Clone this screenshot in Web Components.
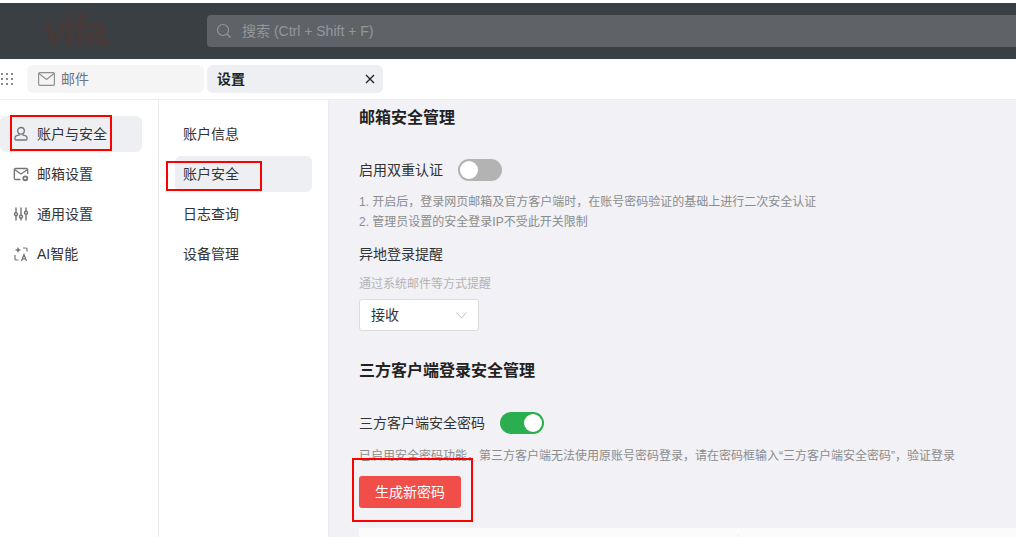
<!DOCTYPE html>
<html lang="zh"><head><meta charset="utf-8">
<style>
html,body{margin:0;padding:0;height:537px;width:1016px;overflow:hidden;background:#fff;font-family:"Liberation Sans","Noto Sans CJK SC",sans-serif}
</style></head><body>
<app-shell></app-shell>
<script>
const I={
user:'<svg width="16" height="16" viewBox="0 0 16 16" fill="none" stroke="#747474" stroke-width="1.300"><circle cx="8" cy="4.800" r="3.300"/><path d="M6 8.200v1C3.500 9.500 2 10.300 2 11.800V13c0 .6.400 1 1 1h10c.6 0 1-.4 1-1v-1.200c0-1.500-1.500-2.300-4-2.600v-1"/></svg>',
mailset:'<svg width="16" height="16" viewBox="0 0 16 16" fill="none" stroke="#747474" stroke-width="1.300"><path d="M7.500 13.500H2.500A1.200 1.200 0 0 1 1.300 12.300V3.700A1.200 1.200 0 0 1 2.500 2.500h11a1.200 1.200 0 0 1 1.200 1.200V8"/><path d="M1.800 3.800 8 8l6.200-4.200"/><circle cx="12.300" cy="12.300" r="2" stroke-width="1.800"/></svg>',
sliders:'<svg width="16" height="16" viewBox="0 0 16 16" fill="none" stroke="#747474" stroke-width="1.400"><path d="M3 1.500v5M3 10v4.500M8 1.500v7.500M8 12.500v2M13 1.500v3.500M13 8.500v6"/><circle cx="3" cy="8.200" r="1.500"/><circle cx="8" cy="10.800" r="1.500"/><circle cx="13" cy="6.800" r="1.500"/></svg>',
ai:'<svg width="16" height="16" viewBox="0 0 16 16" fill="none" stroke="#747474" stroke-width="1.200"><path d="M5 .8l.9 2.300 2.300.9-2.300.9L5 7.200l-.9-2.300L1.800 4l2.300-.9z" fill="#747474" stroke="none"/><path d="M10 2h3c.6 0 1 .4 1 1v2.500M2 9v4c0 .6.400 1 1 1h2.500M8.500 15l2.500-6.500 2.500 6.500M9.400 12.800h3.200"/></svg>',
search:'<svg width="16" height="16" viewBox="0 0 16 16" fill="none" stroke="#94979a" stroke-width="1.200"><circle cx="7" cy="7" r="5.500"/><path d="M11 11l3.500 3.500"/></svg>',
mail:'<svg width="17" height="14" viewBox="0 0 17 14" fill="none" stroke="#8f8f8f" stroke-width="1.200"><rect x=".6" y=".6" width="15.800" height="12.800" rx="1.200"/><path d="M1 1.500l7.500 6 7.500-6"/></svg>',
grid:'<svg width="14" height="14" viewBox="0 0 14 14" fill="#8a8a8a"><rect x="1" y="1" width="2" height="2"/><rect x="6" y="1" width="2" height="2"/><rect x="11" y="1" width="2" height="2"/><rect x="1" y="6" width="2" height="2"/><rect x="6" y="6" width="2" height="2"/><rect x="11" y="6" width="2" height="2"/><rect x="1" y="11" width="2" height="2"/><rect x="6" y="11" width="2" height="2"/><rect x="11" y="11" width="2" height="2"/></svg>'
};
function def(name,css,html){
  customElements.define(name,class extends HTMLElement{
    constructor(){super();this.attachShadow({mode:'open'}).innerHTML='<style>'+css+'</style>'+html;}
  });
}
def('top-bar',`:host{display:flex;box-sizing:border-box;margin-top:3px;background:#3a3f44;align-items:center;padding:0 0 0 43px;height:56px}
.logo{font:700 42px/1 "Liberation Sans",sans-serif;color:#463b3b;-webkit-text-stroke:1px #463b3b;letter-spacing:-2.500px;width:164px}
.s{flex:1;height:32px;background:#5f6367;border-radius:4px 0 0 4px;display:flex;align-items:center;padding-left:9px;gap:10px;color:#94979a;font-size:14px}
.s span{margin-bottom:2px}`,
`<div class="logo">vifa</div><div class="s">${I.search}<span>搜索 (Ctrl + Shift + F)</span></div>`);
def('tab-item',`:host{display:flex;box-sizing:border-box;height:28px;border-radius:6px;align-items:center;background:var(--bg);font-size:14px;color:var(--c)}
:host([active]){font-weight:700}
::slotted(span){margin-bottom:2px}`,`<slot></slot>`);
def('tab-bar',`:host{display:flex;box-sizing:border-box;height:41px;align-items:center;border-bottom:1px solid #ececec;background:#fff}
.g{width:27px;display:flex}
.mail{width:177px;margin-right:3px;--bg:#f5f5f5;--c:#6f7480;padding-left:11px;gap:6px}
.set{width:176px;--bg:#eeeff2;--c:#222;padding:0 8px 0 10px;justify-content:space-between}
.x{font-weight:400;line-height:1;display:flex;margin:0!important}
tab-item{flex:none}`,
`<span class="g">${I.grid}</span><tab-item class="mail">${I.mail}<span>邮件</span></tab-item><tab-item class="set" active><span>设置</span><span class="x"><svg width="10" height="10" viewBox="0 0 10 10" stroke="#222" stroke-width="1.300"><path d="M1 1l8 8M9 1l-8 8"/></svg></span></tab-item>`);
def('nav-item',`:host{display:flex;box-sizing:border-box;height:36px;margin-bottom:4px;border-radius:6px;align-items:center;gap:8px;padding-left:var(--pl,13px);font-size:14px;color:#333}
:host([sel]){background:#eeeff2}
::slotted(svg){flex:none}
::slotted(span){margin-bottom:2px}`,`<slot></slot>`);
def('side-one',`:host{display:block;box-sizing:border-box;width:159px;border-right:1px solid #ececec;padding:16px 16px 0 0;background:#fff}
nav-item{--pl:13px}`,
`<nav-item sel>${I.user}<span>账户与安全</span></nav-item><nav-item>${I.mailset}<span>邮箱设置</span></nav-item><nav-item>${I.sliders}<span>通用设置</span></nav-item><nav-item>${I.ai}<span>AI智能</span></nav-item>`);
def('side-two',`:host{display:block;box-sizing:border-box;width:170px;border-right:1px solid #ececec;padding:16px 16px 0 16px;background:#fff}
nav-item{--pl:8px}`,
`<nav-item><span>账户信息</span></nav-item><nav-item sel><span>账户安全</span></nav-item><nav-item><span>日志查询</span></nav-item><nav-item><span>设备管理</span></nav-item>`);
def('toggle-switch',`:host{display:inline-flex;box-sizing:border-box;width:44px;height:22px;border-radius:11px;background:#b3b3b3;padding:2px;flex:none}
:host([on]){background:#2bae4f;justify-content:flex-end}
i{display:block;width:18px;height:18px;border-radius:50%;background:#fff}`,`<i></i>`);
def('select-box',`:host{display:flex;box-sizing:border-box;width:120px;height:32px;background:#fff;border:1px solid #dcdcdc;border-radius:3px;align-items:center;justify-content:space-between;padding:0 11px;font-size:14px;color:#333}
::slotted(span){margin-bottom:2px}`,
`<slot></slot><svg width="11" height="7" viewBox="0 0 11 7" fill="none" stroke="#bdbdbd"><path d="M.5.500l5 5.500 5-5.500"/></svg>`);
def('sec-title',`:host{display:block;font-size:16px;font-weight:700;line-height:22px;color:#222}`,`<slot></slot>`);
def('set-row',`:host{display:flex;align-items:center;gap:15px;font-size:14px;color:#333;height:22px}
::slotted(span){margin-bottom:3px}`,`<slot></slot>`);
def('main-pane',`:host{display:block;flex:1;background:#f1f1f6;padding-left:30px;overflow:hidden}
.t1{margin-top:7px}
.r1{margin-top:30px}
.note{font-size:12px;line-height:20px;color:#8c8c8c}
.n1{margin-top:11px}
.lab{font-size:14px;line-height:20px;color:#333;margin-top:12px}
.sub{font-size:12px;line-height:18px;color:#b4b4b4;margin-top:11px}
select-box{margin-top:6px}
.t2{margin-top:29px}
.r2{margin-top:30px}
.n2{margin-top:12px}
button{display:block;margin-top:10px;width:102px;height:32px;background:#f24e49;border:0;border-radius:3px;color:#fff;font:14px "Liberation Sans","Noto Sans CJK SC",sans-serif;padding:0 0 2px}
.tb{height:20px;margin-top:20px;background:#fbfbfb;display:flex;align-items:flex-start}
.tb i{display:block;width:380px;height:20px;box-sizing:border-box;margin-top:7px;border-right:1px solid #e8e8e8}`,
`<sec-title class="t1">邮箱安全管理</sec-title>
<set-row class="r1"><span>启用双重认证</span><toggle-switch></toggle-switch></set-row>
<div class="note n1">1. 开启后，登录网页邮箱及官方客户端时，在账号密码验证的基础上进行二次安全认证<br>2. 管理员设置的安全登录IP不受此开关限制</div>
<div class="lab">异地登录提醒</div>
<div class="sub">通过系统邮件等方式提醒</div>
<select-box><span>接收</span></select-box>
<sec-title class="t2">三方客户端登录安全管理</sec-title>
<set-row class="r2"><span>三方客户端安全密码</span><toggle-switch on></toggle-switch></set-row>
<div class="note n2">已启用安全密码功能，第三方客户端无法使用原账号密码登录，请在密码框输入“三方客户端安全密码”，验证登录</div>
<button>生成新密码</button>
<div class="tb"><i></i></div>`);
def('red-mark',`:host{position:absolute;box-sizing:border-box;border:2px solid #f00;pointer-events:none}`,``);
def('app-shell',`:host{display:flex;flex-direction:column;position:relative;width:1016px;height:537px;overflow:hidden}
.body{display:flex;flex:1;min-height:0}
red-mark:nth-of-type(1){left:10px;top:115px;width:102px;height:36px}
red-mark:nth-of-type(2){left:166px;top:161px;width:96px;height:30px}
red-mark:nth-of-type(3){left:352px;top:458px;width:121px;height:64px}`,
`<top-bar></top-bar><tab-bar></tab-bar><div class="body"><side-one></side-one><side-two></side-two><main-pane></main-pane></div><red-mark></red-mark><red-mark></red-mark><red-mark></red-mark>`);
</script>
</body></html>
